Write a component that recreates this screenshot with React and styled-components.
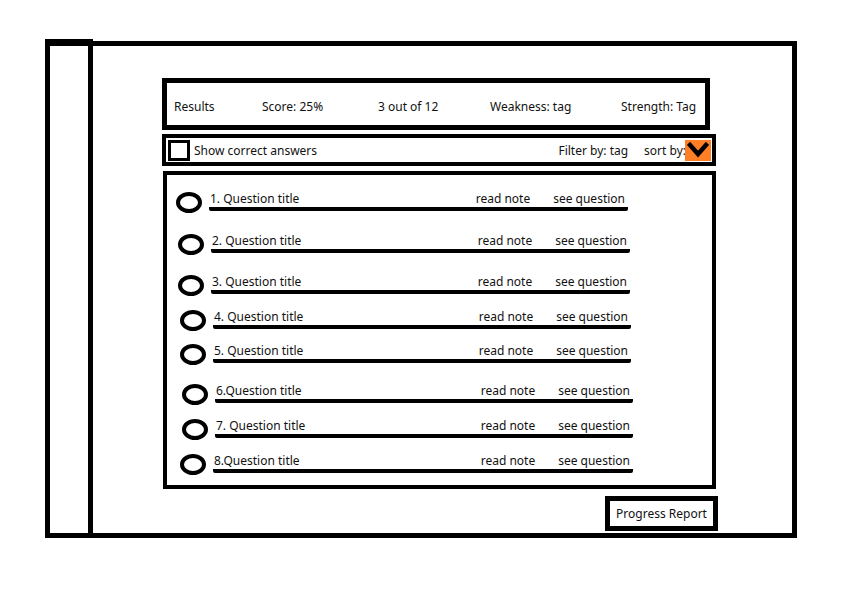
import React from 'react';
import styled, { createGlobalStyle } from 'styled-components';

const GlobalStyle = createGlobalStyle`
  body {
    margin: 0;
    background: #ffffff;
    font-family: "Noto Sans", "Open Sans", sans-serif;
    font-size: 12px;
    color: #111;
  }
`;

const Page = styled.div`
  width: 843px;
  height: 591px;
  padding: 41px 0 0 45px;
  box-sizing: border-box;
`;

const Frame = styled.div`
  width: 752px;
  height: 497px;
  border: 5px solid #000;
  box-sizing: border-box;
  display: flex;
`;

const Sidebar = styled.div`
  width: 38px;
  margin-top: -7px;
  border-right: 5px solid #000;
  border-top: 5px solid #000;
  margin-left: -5px;
  padding-left: 5px;
`;

const Main = styled.div`
  flex: 1;
  padding: 32px 0 0 69px;
  display: flex;
  flex-direction: column;
  align-items: flex-start;
`;

const Header = styled.div`
  width: 548px;
  height: 52px;
  border: 5px solid #000;
  box-sizing: border-box;
  display: grid;
  grid-template-columns: 88px 116px 112px 131px 1fr;
  align-items: center;
  padding: 4px 0 0 7px;
`;

const FilterBar = styled.div`
  width: 554px;
  height: 32px;
  margin-top: 4px;
  border: 4px solid #000;
  box-sizing: border-box;
  display: flex;
  align-items: center;
  padding: 0 1px 0 2px;
`;

const Checkbox = styled.div`
  width: 22px;
  height: 21px;
  border: 3px solid #000;
  box-sizing: border-box;
  margin-right: 4px;
`;

const Spacer = styled.div`
  flex: 1;
`;

const SortLabel = styled.span`
  margin-left: 16px;
  margin-right: -1px;
`;

const Dropdown = styled.div`
  width: 26px;
  height: 21px;
  background: #ff7f27;
  display: flex;
  align-items: center;
  justify-content: center;
`;

const List = styled.div`
  width: 553px;
  height: 318px;
  margin: 5px 0 0 1px;
  border: 4px solid #000;
  box-sizing: border-box;
  padding: 15px 0 0 9px;
`;

const Row = styled.div`
  display: flex;
  align-items: flex-end;
  margin-top: ${(p) => p.gap}px;
  padding-left: ${(p) => p.shift}px;
`;

const Oval = styled.div`
  width: 26px;
  height: 21px;
  border: 4px solid #000;
  border-radius: 50%;
  box-sizing: border-box;
  margin: 0 7px -2px 0;
`;

const Line = styled.div`
  width: ${(p) => p.len}px;
  box-sizing: border-box;
  display: flex;
  align-items: flex-end;
  border-bottom: 4px solid #000;
  border-radius: 2px;
  padding: 0 3px 0 1px;
  line-height: 17px;
`;

const Links = styled.div`
  margin-left: auto;
  display: flex;
  gap: 23px;
`;

const Footer = styled.div`
  align-self: stretch;
  display: flex;
  justify-content: flex-end;
  padding-right: 74px;
  margin-top: 7px;
`;

const ReportButton = styled.div`
  width: 113px;
  height: 35px;
  border: 5px solid #000;
  box-sizing: border-box;
  display: flex;
  align-items: center;
  justify-content: center;
  padding-bottom: 1px;
`;

const questions = [
  { n: '1. ', gap: 0, shift: 0, len: 419 },
  { n: '2. ', gap: 21, shift: 2, len: 419 },
  { n: '3. ', gap: 20, shift: 2, len: 419 },
  { n: '4. ', gap: 14, shift: 4, len: 418 },
  { n: '5. ', gap: 13, shift: 4, len: 418 },
  { n: '6.', gap: 19, shift: 6, len: 418 },
  { n: '7. ', gap: 14, shift: 6, len: 418 },
  { n: '8.', gap: 14, shift: 4, len: 420 },
];

const App = () => (
  <>
    <GlobalStyle />
    <Page>
      <Frame>
        <Sidebar />
        <Main>
          <Header>
            <span>Results</span>
            <span>Score: 25%</span>
            <span>3 out of 12</span>
            <span>Weakness: tag</span>
            <span>Strength: Tag</span>
          </Header>
          <FilterBar>
            <Checkbox />
            <span>Show correct answers</span>
            <Spacer />
            <span>Filter by: tag</span>
            <SortLabel>sort by:</SortLabel>
            <Dropdown>
              <svg width="22" height="16" viewBox="0 0 22 16">
                <path d="M3 3 L11 12 L19 3" fill="none" stroke="#000" strokeWidth="4.5" strokeLinecap="square" />
              </svg>
            </Dropdown>
          </FilterBar>
          <List>
            {questions.map((q) => (
              <Row key={q.n} gap={q.gap} shift={q.shift}>
                <Oval />
                <Line len={q.len}>
                  <span>{q.n}Question title</span>
                  <Links>
                    <span>read note</span>
                    <span>see question</span>
                  </Links>
                </Line>
              </Row>
            ))}
          </List>
          <Footer>
            <ReportButton>Progress Report</ReportButton>
          </Footer>
        </Main>
      </Frame>
    </Page>
  </>
);

export default App;
